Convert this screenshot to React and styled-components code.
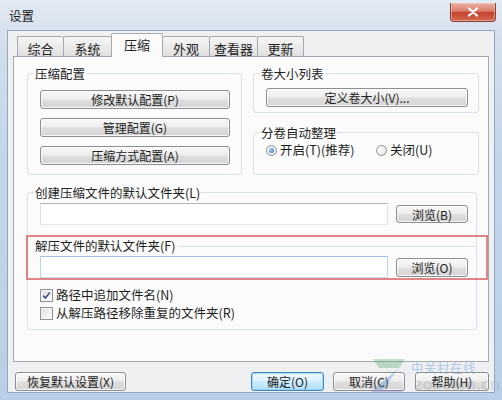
import React from 'react'
import styled, { createGlobalStyle, css } from 'styled-components'

const GlobalStyle = createGlobalStyle`
  html, body {
    margin: 0;
    padding: 0;
    background: #ffffff;
  }
  body {
    font-family: "Noto Sans CJK SC", "Noto Sans", sans-serif;
    font-size: 12.5px;
    color: #1e1e1e;
  }
`

const Window = styled.div`
  position: relative;
  width: 502px;
  height: 400px;
  box-sizing: border-box;
  display: flex;
  flex-direction: column;
  overflow: hidden;
  background: linear-gradient(180deg, #e2eaf3 0%, #d3dfec 10%, #c3d5e9 40%, #bacfe7 100%);
`

const TitleBar = styled.div`
  height: 30px;
  flex: none;
  display: flex;
  align-items: flex-start;
  justify-content: space-between;
`

const Title = styled.div`
  padding: 9px 0 0 9px;
  font-size: 12.5px;
  line-height: 14px;
  color: #222;
`

const CloseButton = styled.div`
  width: 46px;
  height: 19px;
  margin: 3px 6px 0 0;
  box-sizing: border-box;
  border: 1px solid #8a3f33;
  border-top: none;
  border-radius: 0 0 4px 4px;
  background: linear-gradient(180deg, #eab0a4 0%, #dc8270 42%, #c5432d 55%, #d46a52 100%);
  box-shadow: inset 0 0 0 1px rgba(255, 220, 210, 0.45);
  display: flex;
  align-items: center;
  justify-content: center;
`

const Client = styled.div`
  flex: 1;
  margin: 0 7px 7px;
  border: 1px solid #92a7bf;
  background: #eff0f2;
  padding: 0 5px;
  display: flex;
  flex-direction: column;
  min-height: 0;
`

const TabRow = styled.div`
  height: 25px;
  flex: none;
  display: flex;
  align-items: flex-end;
  padding-left: 4px;
  position: relative;
  z-index: 1;
`

const Tab = styled.div`
  width: ${p => p.$w}px;
  height: 20px;
  box-sizing: border-box;
  border: 1px solid #a4a9b0;
  border-bottom: none;
  border-right: none;
  border-radius: 2px 2px 0 0;
  background: linear-gradient(180deg, #f5f5f5 0%, #ebebeb 50%, #dfdfdf 100%);
  font-size: 13px;
  line-height: 14px;
  padding-top: 5px;
  text-align: center;
  color: #222;
  &:last-child {
    border-right: 1px solid #a4a9b0;
  }
  ${p => p.$active && css`
    height: 24px;
    margin-bottom: -1px;
    border-right: 1px solid #a4a9b0;
    background: #fbfbfb;
    padding-top: 4px;
    & + div { border-left: none; }
  `}
`

const Panel = styled.div`
  height: 306px;
  flex: none;
  box-sizing: border-box;
  border: 1px solid #a4a9b0;
  background: #fbfbfb;
  padding: 10px 9px 0 13px;
  display: flex;
  flex-direction: column;
`

const TopRow = styled.div`
  display: flex;
  gap: 11px;
  align-items: stretch;
`

const Group = styled.fieldset`
  margin: 0;
  min-width: 0;
  box-sizing: border-box;
  border: 1px solid #d9e0e6;
  border-radius: 3px;
  padding: ${p => p.$pad};
  display: flex;
  flex-direction: column;
`

const Legend = styled.legend`
  padding: 0 1px;
  margin-left: -6px;
  font-size: 12.5px;
  line-height: 13px;
  color: #222;
`

const LeftGroup = styled(Group)`
  width: 215px;
  gap: 9px;
`

const RightColumn = styled.div`
  width: 226px;
  display: flex;
  flex-direction: column;
  gap: 13px;
`

const SplitGroup = styled(Group)`
  flex: 1;
`

const Button = styled.button`
  width: ${p => (p.$w ? `${p.$w}px` : '100%')};
  height: ${p => p.$h || 19}px;
  flex: none;
  box-sizing: border-box;
  padding: 0;
  border: 1px solid #8c8e92;
  border-radius: 3px;
  background: linear-gradient(180deg, #f8f8f8 0%, #eeeeee 46%, #dedede 54%, #d5d5d5 100%);
  box-shadow: inset 0 0 0 1px rgba(255, 255, 255, 0.75);
  font-family: inherit;
  font-size: 12px;
  line-height: 15px;
  color: #222;
  text-align: center;
  ${p => p.$primary && css`
    border-color: #3f86bd;
    background: linear-gradient(180deg, #eef8fe 0%, #dff2fd 46%, #c8eafc 54%, #b5e0f8 100%);
    box-shadow: inset 0 0 0 1px rgba(140, 215, 250, 0.8);
  `}
`

const RadioRow = styled.div`
  display: flex;
  align-items: center;
  height: 14px;
`

const RadioItem = styled.label`
  display: flex;
  align-items: center;
  gap: 3px;
  width: ${p => p.$w}px;
  line-height: 14px;
`

const RadioDot = styled.span`
  width: 11px;
  height: 11px;
  box-sizing: border-box;
  border-radius: 50%;
  border: 1px solid #909397;
  background: radial-gradient(circle at 40% 40%, #ffffff 0%, #e8e8e8 60%, #d4d4d4 100%);
  display: flex;
  align-items: center;
  justify-content: center;
  &::after {
    content: '';
    width: 5px;
    height: 5px;
    border-radius: 50%;
    background: ${p => (p.$on ? 'radial-gradient(circle at 35% 35%, #a6d2f5, #2d6db3)' : 'transparent')};
  }
`

const LowerGroup = styled(Group)`
  margin-top: 11px;
  margin-right: 2px;
`

const FolderRow = styled.div`
  display: flex;
  align-items: center;
  gap: 8px;
  height: 22px;
`

const TextBox = styled.div`
  flex: 1;
  height: 22px;
  box-sizing: border-box;
  border: 1px solid;
  border-color: #b3b5ba #dde1e7 #e3e8ee #dde1e7;
  background: #ffffff;
  ${p => p.$focus && css`
    border-color: #9fc2e4 #bcd5ed #c9ddf0 #bcd5ed;
  `}
`

const Highlight = styled.div`
  margin: 10px -20px 0 -14px;
  border: 2px solid rgba(220, 110, 112, 0.85);
  padding: 2px 18px 0 12px;
`

const SubLabel = styled.div`
  display: flex;
  align-items: center;
  height: 14px;
  line-height: 14px;
  margin: 0 -8px 3px -5px;
  &::after {
    content: '';
    flex: 1;
    height: 1px;
    margin-left: 4px;
    background: #d9e0e6;
  }
`

const Checks = styled.div`
  margin-top: 6px;
  display: flex;
  flex-direction: column;
`

const CheckRow = styled.label`
  display: flex;
  align-items: center;
  gap: 3px;
  height: 18px;
  line-height: 14px;
`

const CheckBox = styled.span`
  width: 13px;
  height: 13px;
  box-sizing: border-box;
  border: 1px solid #8f9194;
  background: linear-gradient(135deg, #dcdcdc 0%, #f4f4f4 60%, #ffffff 100%);
  box-shadow: inset 0 0 0 1px #f7f7f7;
  display: flex;
  align-items: center;
  justify-content: center;
`

const Footer = styled.div`
  height: 30px;
  flex: none;
  box-sizing: border-box;
  padding: 10px 0 0 2px;
  display: flex;
  align-items: flex-start;
`

const Spacer = styled.div`
  flex: 1;
`

const FooterGap = styled.div`
  width: ${p => p.$w}px;
  flex: none;
`

const Watermark = styled.div`
  position: absolute;
  left: 369px;
  top: 357px;
  display: flex;
  gap: 4px;
  pointer-events: none;
`

const MarkText = styled.div`
  display: flex;
  flex-direction: column;
  padding-top: 4px;
`

const MarkCn = styled.div`
  font-size: 12.5px;
  line-height: 14px;
  letter-spacing: 0.5px;
  color: rgba(120, 165, 215, 0.55);
`

const MarkUrl = styled.div`
  font-family: "DejaVu Sans", sans-serif;
  font-size: 16px;
  line-height: 20px;
  margin-left: 3px;
  color: rgba(140, 145, 155, 0.3);
`

const tabs = [
  { label: '综合', w: 46 },
  { label: '系统', w: 48 },
  { label: '压缩', w: 52, active: true },
  { label: '外观', w: 46 },
  { label: '查看器', w: 48 },
  { label: '更新', w: 47 },
]

export default function App() {
  return (
    <Window>
      <GlobalStyle />
      <TitleBar>
        <Title>设置</Title>
        <CloseButton>
          <svg width="12" height="10" viewBox="0 0 12 10">
            <path d="M2 1.5 L10 8.5 M10 1.5 L2 8.5" stroke="#ffffff" strokeWidth="2.2" strokeLinecap="round" />
          </svg>
        </CloseButton>
      </TitleBar>

      <Client>
        <TabRow>
          {tabs.map(t => (
            <Tab key={t.label} $w={t.w} $active={t.active}>{t.label}</Tab>
          ))}
        </TabRow>

        <Panel>
          <TopRow>
            <LeftGroup $pad="10px 11px 9px 12px">
              <Legend>压缩配置</Legend>
              <Button>修改默认配置(P)</Button>
              <Button>管理配置(G)</Button>
              <Button>压缩方式配置(A)</Button>
            </LeftGroup>

            <RightColumn>
              <Group $pad="8px 10px 5px 12px">
                <Legend>卷大小列表</Legend>
                <Button>定义卷大小(V)...</Button>
              </Group>
              <SplitGroup $pad="4px 10px 0 12px">
                <Legend>分卷自动整理</Legend>
                <RadioRow>
                  <RadioItem $w={110}><RadioDot $on />开启(T)(推荐)</RadioItem>
                  <RadioItem $w={80}><RadioDot />关闭(U)</RadioItem>
                </RadioRow>
              </SplitGroup>
            </RightColumn>
          </TopRow>

          <LowerGroup $pad="4px 8px 7px 12px">
            <Legend>创建压缩文件的默认文件夹(L)</Legend>
            <FolderRow>
              <TextBox />
              <Button $w={72} $h={18}>浏览(B)</Button>
            </FolderRow>

            <Highlight>
              <SubLabel>解压文件的默认文件夹(F)</SubLabel>
              <FolderRow>
                <TextBox $focus />
                <Button $w={72} $h={19}>浏览(O)</Button>
              </FolderRow>
            </Highlight>

            <Checks>
              <CheckRow>
                <CheckBox>
                  <svg width="9" height="9" viewBox="0 0 9 9">
                    <path d="M1.2 4.6 L3.4 7 L7.8 1.4" fill="none" stroke="#3d4f7c" strokeWidth="1.6" />
                  </svg>
                </CheckBox>
                路径中追加文件名(N)
              </CheckRow>
              <CheckRow>
                <CheckBox />
                从解压路径移除重复的文件夹(R)
              </CheckRow>
            </Checks>
          </LowerGroup>
        </Panel>

        <Footer>
          <Button $w={111}>恢复默认设置(X)</Button>
          <Spacer />
          <Button $w={73} $primary>确定(O)</Button>
          <FooterGap $w={9} />
          <Button $w={72}>取消(C)</Button>
          <FooterGap $w={10} />
          <Button $w={74}>帮助(H)</Button>
        </Footer>
      </Client>

      <Watermark>
        <svg width="38" height="36" viewBox="0 0 38 36">
          <g opacity="0.35">
            <path d="M4 2 L36 2 L30 11 L10 11 Z" fill="#5aa86a" />
            <path d="M30 11 L36 2 L14 33 L4 33 Z" fill="#4f86c9" />
            <path d="M4 33 L14 33 L36 33 L32 35 L2 35 Z" fill="#8a6cc0" />
          </g>
        </svg>
        <MarkText>
          <MarkCn>中关村在线</MarkCn>
          <MarkUrl>zol.com.cn</MarkUrl>
        </MarkText>
      </Watermark>
    </Window>
  )
}
